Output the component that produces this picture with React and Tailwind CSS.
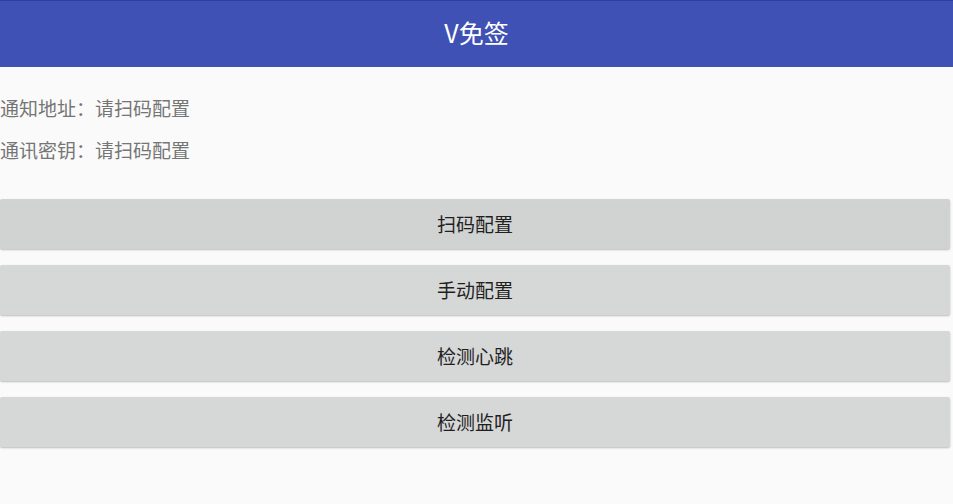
import React from 'react';

const buttons = ['扫码配置', '手动配置', '检测心跳', '检测监听'];

const App = () => {
  return (
    <div
      className="w-[953px] h-[504px] bg-[#fafafa] overflow-hidden"
      style={{ fontFamily: '"Noto Sans CJK SC", "Noto Sans", Roboto, sans-serif' }}
    >
      {/* Toolbar */}
      <header className="h-[67px] bg-[#3f51b5] border-t border-[#303f9f] flex items-center justify-center pb-[3px]">
        <h1 className="text-[25px] text-white font-normal leading-none">V免签</h1>
      </header>

      {/* Info */}
      <div className="pt-[27px] flex flex-col gap-[15px] text-[19px] leading-[27px] text-[#757575]">
        <p>通知地址：请扫码配置</p>
        <p>通讯密钥：请扫码配置</p>
      </div>

      {/* Buttons */}
      <div className="mt-[36px] pr-[3px] flex flex-col gap-[16px]">
        {buttons.map((label, i) => (
          <button
            key={label}
            className={`h-[50px] w-full rounded-[2px] text-[19px] text-[#1f1f1f] shadow-[0_1px_2px_rgba(0,0,0,0.25)] ${
              i === 0 ? 'bg-[#d1d2d2]' : 'bg-[#d6d7d7]'
            }`}
          >
            {label}
          </button>
        ))}
      </div>
    </div>
  );
};

export default App;
